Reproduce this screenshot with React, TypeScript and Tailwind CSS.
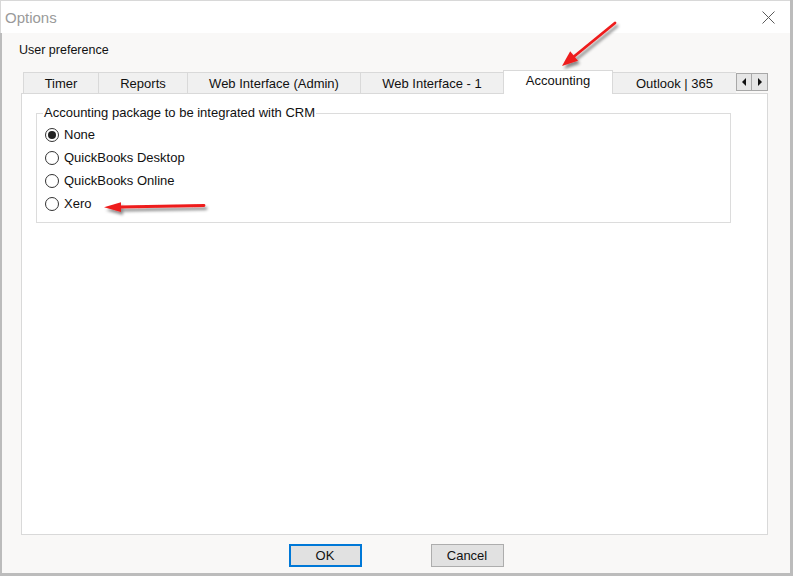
import React from "react";

const font = { fontFamily: '"Liberation Sans", Arial, sans-serif' };

function Tab({ label, w, selected }: { label: string; w: string; selected?: boolean }) {
  if (selected) {
    return (
      <div
        className={`${w} h-[24px] -mb-px relative z-10 bg-white border-t border-l border-r border-[#d9d9d9] flex items-center justify-center text-[13px] text-[#111] pb-[3px]`}
      >
        {label}
      </div>
    );
  }
  return (
    <div
      className={`${w} h-[21px] bg-[#f0f0f0] border-t border-l border-[#d9d9d9] flex items-center justify-center text-[13px] text-[#111] pt-px`}
    >
      {label}
    </div>
  );
}

function Radio({ label, checked }: { label: string; checked?: boolean }) {
  return (
    <div className="h-[23px] flex items-center">
      <div className="w-[14px] h-[14px] rounded-full border border-[#333] bg-white flex items-center justify-center">
        {checked && <div className="w-[8px] h-[8px] rounded-full bg-[#222]" />}
      </div>
      <span className="ml-[5px] text-[13px] text-[#111]">{label}</span>
    </div>
  );
}

export default function App() {
  return (
    <div className="relative w-[793px] h-[576px] flex flex-col border-r-[3px] border-b-[3px] border-[#bcbcbc] bg-white" style={font}>
      {/* Title bar */}
      <div className="h-[33px] shrink-0 bg-white border-t border-l border-[#d8d8d8] flex items-center justify-between pl-[4px] pr-[15px]">
        <span className="text-[15px] text-[#9a9a9a] leading-none">Options</span>
        <svg width="13" height="13" viewBox="0 0 13 13" className="mt-[1px]">
          <path d="M0.5 0.5 L12.5 12.5 M12.5 0.5 L0.5 12.5" stroke="#5a5a5a" strokeWidth="1" fill="none" />
        </svg>
      </div>

      {/* Body */}
      <div className="flex-1 bg-[#f9f8f7] border-l-2 border-[#bcbcbc] flex flex-col">
        <div className="pt-[9px] pl-[17px] text-[12.5px] leading-[16px] text-[#111]">User preference</div>

        <div className="mt-[12px] ml-[19px] mr-[22px] flex flex-col">
          {/* Tab strip */}
          <div className="h-[23px] flex items-end pl-[2px]">
            <Tab label="Timer" w="w-[75px]" />
            <Tab label="Reports" w="w-[89px]" />
            <Tab label="Web Interface (Admin)" w="w-[173px]" />
            <Tab label="Web Interface - 1" w="w-[143px]" />
            <Tab label="Accounting" w="w-[110px]" selected />
            <div className="w-[123px] h-[21px] bg-[#f0f0f0] border-t border-[#d9d9d9] flex items-center justify-center text-[13px] text-[#111] pt-px">
              Outlook | 365
            </div>
            <div className="ml-auto self-start mt-[3px] flex h-[18px]">
              <div className="w-[16px] h-[18px] bg-[#e6e6e6] border border-[#a8a8a8] flex items-center justify-center">
                <svg width="6" height="8" viewBox="0 0 6 8"><path d="M5 0 L1 4 L5 8 Z" fill="#111" /></svg>
              </div>
              <div className="w-[16px] h-[18px] bg-[#e6e6e6] border border-l-0 border-[#a8a8a8] flex items-center justify-center">
                <svg width="6" height="8" viewBox="0 0 6 8"><path d="M1 0 L5 4 L1 8 Z" fill="#111" /></svg>
              </div>
            </div>
          </div>

          {/* Panel */}
          <div className="h-[442px] bg-white border border-[#d9d9d9] flex flex-col">
            <fieldset className="mt-[11px] ml-[14px] mr-[36px] border border-[#dcdcdc] pb-[7px]">
              <legend className="ml-[6px] px-[1px] text-[13px] leading-[16px] text-[#111]">
                Accounting package to be integrated with CRM
              </legend>
              <div className="pt-[2px] pl-[8px] flex flex-col">
                <Radio label="None" checked />
                <Radio label="QuickBooks Desktop" />
                <Radio label="QuickBooks Online" />
                <Radio label="Xero" />
              </div>
            </fieldset>
          </div>
        </div>

        {/* Buttons */}
        <div className="pt-[9px] flex justify-center gap-[69px]">
          <button className="w-[73px] h-[23px] bg-[#e1e1e1] border-2 border-[#0078d7] text-[13px] text-[#111] flex items-center justify-center">
            OK
          </button>
          <button className="w-[73px] h-[23px] bg-[#e1e1e1] border border-[#adadad] text-[13px] text-[#111] flex items-center justify-center">
            Cancel
          </button>
        </div>
      </div>

      {/* Annotation arrows */}
      <svg className="absolute left-0 top-0 pointer-events-none" width="793" height="576" viewBox="0 0 793 576">
        <defs>
          <filter id="sh" x="-20%" y="-20%" width="140%" height="140%">
            <feDropShadow dx="2" dy="3" stdDeviation="1.6" floodColor="#000" floodOpacity="0.45" />
          </filter>
        </defs>
        <g filter="url(#sh)">
          <line x1="615" y1="23" x2="574" y2="56.5" stroke="#ee1c1c" strokeWidth="2.8" strokeLinecap="round" />
          <polygon points="562,66 578,60.8 570.2,51.2" fill="#ee1c1c" />
          <line x1="204" y1="205.5" x2="119" y2="207" stroke="#ee1c1c" strokeWidth="2.8" strokeLinecap="round" />
          <polygon points="104,207.2 121,202.2 121,212" fill="#ee1c1c" />
        </g>
      </svg>
    </div>
  );
}
